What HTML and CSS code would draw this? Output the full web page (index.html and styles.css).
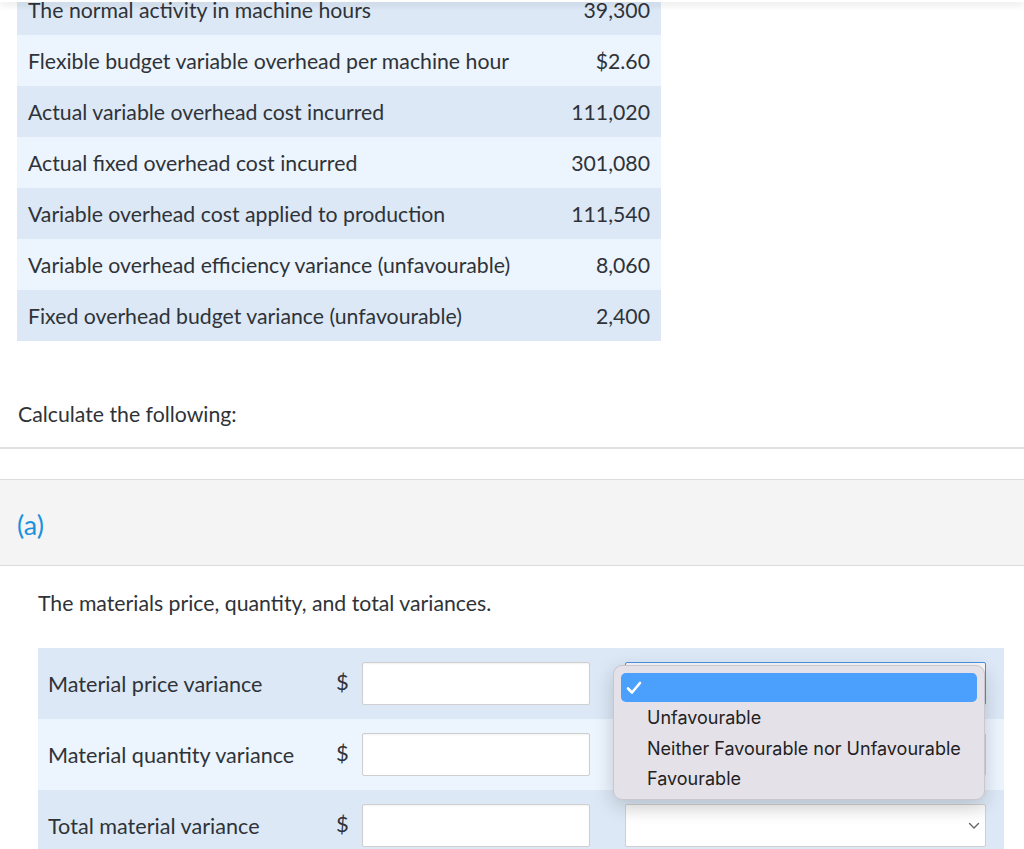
FILE: index.html
```html
<!DOCTYPE html>
<html lang="en">
<head>
<meta charset="utf-8">
<title>Variances</title>
<link rel="stylesheet" href="styles.css">
</head>
<body>
<div class="topbar"></div>
<main class="page">
  <table class="data">
    <tr><td>The normal activity in machine hours</td><td class="num">39,300</td></tr>
    <tr><td>Flexible budget variable overhead per machine hour</td><td class="num">$2.60</td></tr>
    <tr><td>Actual variable overhead cost incurred</td><td class="num">111,020</td></tr>
    <tr><td>Actual fixed overhead cost incurred</td><td class="num">301,080</td></tr>
    <tr><td>Variable overhead cost applied to production</td><td class="num">111,540</td></tr>
    <tr><td>Variable overhead efficiency variance (unfavourable)</td><td class="num">8,060</td></tr>
    <tr><td>Fixed overhead budget variance (unfavourable)</td><td class="num">2,400</td></tr>
  </table>

  <p class="prompt">Calculate the following:</p>
  <div class="rule"></div>

  <section class="part">
    <div class="part-head"><span class="part-label">(a)</span></div>
    <div class="part-body">
      <p class="question">The materials price, quantity, and total variances.</p>
      <div class="answers">
        <div class="arow">
          <span class="alabel">Material price variance</span>
          <span class="dollar">$</span>
          <span class="input"></span>
          <span class="select focused"></span>
        </div>
        <div class="arow">
          <span class="alabel">Material quantity variance</span>
          <span class="dollar">$</span>
          <span class="input"></span>
          <span class="select"></span>
        </div>
        <div class="arow">
          <span class="alabel">Total material variance</span>
          <span class="dollar">$</span>
          <span class="input"></span>
          <span class="select"><span class="chev"><svg width="12" height="8" viewBox="0 0 12 8"><path d="M1.5 1.5 L6 6 L10.5 1.5" fill="none" stroke="#666" stroke-width="1.4" stroke-linecap="round" stroke-linejoin="round"/></svg></span></span>
        </div>
        <div class="popup">
          <div class="opt selected"><svg class="check" width="16" height="14" viewBox="0 0 16 14"><path d="M2 7.5 L6 11.5 L14 2" fill="none" stroke="#fff" stroke-width="2.6" stroke-linecap="round" stroke-linejoin="round"/></svg></div>
          <div class="opt">Unfavourable</div>
          <div class="opt">Neither Favourable nor Unfavourable</div>
          <div class="opt">Favourable</div>
        </div>
      </div>
    </div>
  </section>
</main>
</body>
</html>
```
FILE: styles.css
```css
html, body {
  margin: 0;
  padding: 0;
  background: #fff;
}
body {
  font-family: Lato, "Liberation Sans", sans-serif;
  color: #2f3338;
  overflow: hidden;
  height: 849px;
}
.topbar {
  position: fixed;
  top: 0;
  left: 0;
  right: 0;
  height: 2px;
  background: #fff;
  box-shadow: 0 2px 7px rgba(0, 0, 0, 0.22);
  z-index: 10;
}
.data {
  margin: -16px 0 0 17px;
  width: 644px;
  border-collapse: collapse;
  font-size: 21.25px;
}
.data td {
  height: 51px;
  padding: 0 11px;
  line-height: 24px;
  background: #dce8f6;
  box-sizing: border-box;
}
.data tr:nth-child(even) td {
  background: #ecf4fd;
}
.data td.num {
  text-align: right;
}
.prompt {
  margin: 59px 0 0 18px;
  font-size: 21.25px;
  line-height: 28px;
}
.rule {
  margin-top: 19px;
  height: 2px;
  background: #e0e0e0;
}
.part {
  margin-top: 30px;
}
.part-head {
  border-top: 1px solid #dcdcdc;
  border-bottom: 1px solid #dcdcdc;
  background: #f4f4f4;
  height: 85px;
  display: flex;
  align-items: center;
  padding-left: 17px;
}
.part-label {
  color: #1a91dc;
  font-size: 27px;
  font-weight: 400;
  margin-top: 3px;
}
.part-body {
  padding: 0 20px 0 38px;
}
.question {
  margin: 24px 0 0 0;
  font-size: 21.25px;
  line-height: 26px;
}
.answers {
  position: relative;
  margin-top: 32px;
}
.arow {
  display: flex;
  align-items: center;
  height: 71px;
  background: #dce8f6;
  padding-left: 10px;
  font-size: 21.6px;
}
.arow:nth-child(2) {
  background: #ecf4fd;
}
.alabel {
  width: 288px;
}
.dollar {
  width: 26px;
  font-size: 22px;
  margin-top: -4px;
}
.input {
  width: 226px;
  height: 41px;
  border: 1px solid #cfcfcf;
  border-radius: 2px;
  background: #fff;
  box-shadow: inset 0 1px 2px rgba(0, 0, 0, 0.06);
}
.select {
  margin-left: 35px;
  width: 359px;
  height: 41px;
  border: 1px solid #cfcfcf;
  border-radius: 2px;
  background: linear-gradient(#f7f7f7, #ffffff 40%);
  position: relative;
}
.select.focused {
  border-color: #4a90e2;
}
.chev {
  position: absolute;
  right: 5px;
  top: 17px;
  line-height: 0;
}
.popup {
  position: absolute;
  left: 575px;
  top: 17px;
  width: 372px;
  height: 135px;
  box-sizing: border-box;
  background: #e4e1e9;
  border: 1px solid #c9c6ce;
  border-radius: 9px;
  box-shadow: 0 6px 20px rgba(0, 0, 0, 0.18);
  padding: 6px 7px;
  font-family: Inter, "Liberation Sans", sans-serif;
  font-size: 18px;
  color: #222;
}
.opt {
  height: 30.5px;
  line-height: 30.5px;
  padding-left: 26px;
}
.opt.selected {
  height: 29px;
  margin-top: 1px;
  background: #4b9ffd;
  border-radius: 5px;
  position: relative;
  margin-bottom: 1px;
}
.check {
  position: absolute;
  left: 5px;
  top: 8px;
}
```
